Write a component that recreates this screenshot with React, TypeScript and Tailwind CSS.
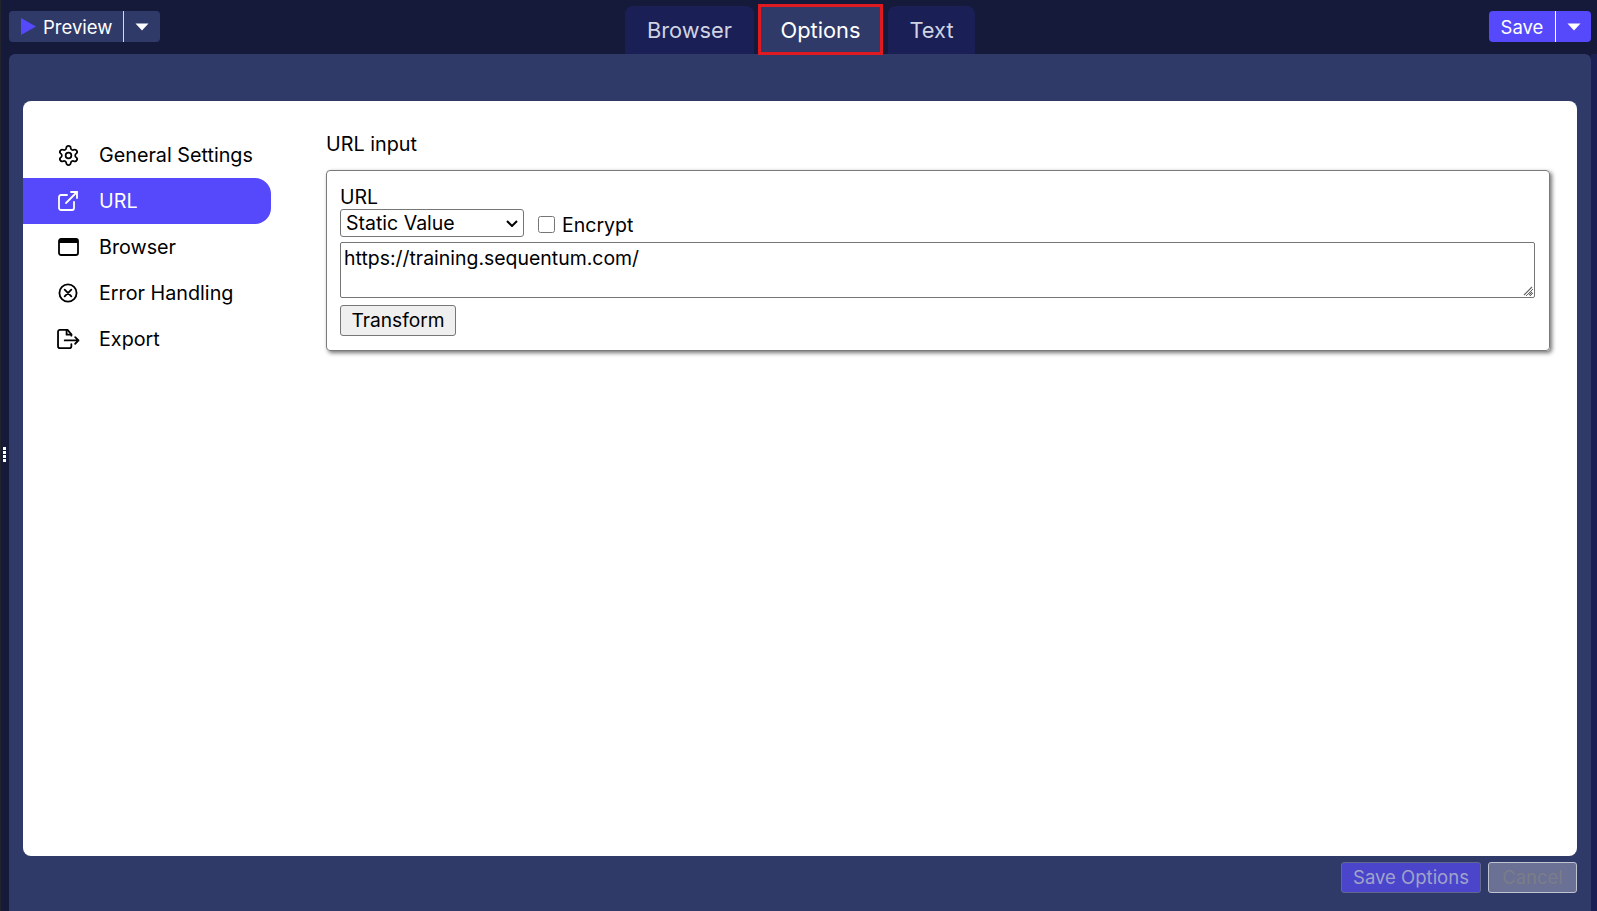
import React from "react";
import { Settings, ExternalLink } from "lucide-react";

function Caret() {
  return (
    <svg width="14" height="8" viewBox="0 0 14 8" aria-hidden="true">
      <path d="M0.5 0.5h13L7 7.5z" fill="#fff" />
    </svg>
  );
}

function BrowserIcon() {
  return (
    <svg width="21" height="18" viewBox="0 0 21 18" fill="none" aria-hidden="true">
      <rect x="1" y="1" width="19" height="16" rx="2" stroke="#000" strokeWidth="1.8" />
      <path d="M1 2.5a1.5 1.5 0 0 1 1.5-1.5h16a1.5 1.5 0 0 1 1.5 1.5V5H1z" fill="#000" />
    </svg>
  );
}

function ErrorIcon() {
  return (
    <svg width="20" height="20" viewBox="0 0 21 21" fill="none" stroke="#000" strokeWidth="1.9" strokeLinecap="round" aria-hidden="true">
      <circle cx="10.5" cy="10.5" r="9" />
      <path d="M7 7l7 7M14 7l-7 7" />
    </svg>
  );
}

function ExportIcon() {
  return (
    <svg width="23" height="20" viewBox="0 0 24 21" fill="none" stroke="#000" strokeWidth="1.9" strokeLinecap="round" strokeLinejoin="round" aria-hidden="true">
      <path d="M15 7V5.6L11 1H3a2 2 0 0 0-2 2v15a2 2 0 0 0 2 2h10a2 2 0 0 0 2-2v-2" />
      <path d="M10 1v5h5" />
      <path d="M8 12h14.5M19 8.5l3.5 3.5-3.5 3.5" />
    </svg>
  );
}

const items = [
  { label: "General Settings", icon: <Settings size={23} strokeWidth={1.8} /> },
  { label: "URL", icon: <ExternalLink size={24} strokeWidth={1.8} />, active: true },
  { label: "Browser", icon: <BrowserIcon /> },
  { label: "Error Handling", icon: <ErrorIcon /> },
  { label: "Export", icon: <ExportIcon /> },
];

export default function App() {
  return (
    <div className="flex h-[911px] w-[1597px] overflow-hidden bg-[#151a3a] font-['Inter',sans-serif]">
      <div className="flex w-[9px] shrink-0 flex-col items-start justify-center border-l border-[#23232b]">
        <div className="ml-[2px] mt-[-2px] flex flex-col gap-[1px]">
          <span className="block h-[3px] w-[3px] bg-white" />
          <span className="block h-[3px] w-[3px] bg-white" />
          <span className="block h-[3px] w-[3px] bg-white" />
          <span className="block h-[3px] w-[3px] bg-white" />
        </div>
      </div>

      <div className="flex min-w-0 flex-1 flex-col">
        <header className="relative z-10 flex h-[54px] shrink-0 items-start justify-between">
          <div className="mt-[11px] flex h-[31px] w-[151px] items-center rounded-[4px] bg-[#2f3a69] text-white">
            <div className="flex h-full w-[115px] items-center border-r border-[#d6d9e6] pl-[12px]">
              <svg className="mb-[1px]" width="15" height="17" viewBox="0 0 15 17" aria-hidden="true">
                <path d="M0 0l15 8.5L0 17z" fill="#5549fb" />
              </svg>
              <span className="ml-[7px] pt-[1px] text-[18.5px] leading-none">Preview</span>
            </div>
            <div className="flex flex-1 items-center justify-center pr-[1px]">
              <Caret />
            </div>
          </div>

          <nav className="mr-[49px] flex h-[54px] items-start text-[21.8px] leading-none">
            <div className="mt-[6px] flex h-[48px] w-[129px] items-center justify-center rounded-t-[8px] bg-[#1a1f55] pt-[2px] text-[#d0d3e2]">Browser</div>
            <div className="ml-[4px] mt-[4px] flex h-[51px] w-[125px] items-center justify-center border-[3px] border-[#df1a21] bg-[#2f3a69] pt-[2px] text-white">Options</div>
            <div className="ml-[5px] mt-[6px] flex h-[48px] w-[87px] items-center justify-center rounded-t-[8px] bg-[#1a1f55] pt-[2px] text-[#d0d3e2]">Text</div>
          </nav>

          <div className="mr-[6px] mt-[11px] flex h-[31px] w-[102px] items-center rounded-[4px] bg-[#5549fb] text-white">
            <div className="flex h-full w-[67px] items-center justify-center border-r border-white pt-[1px] text-[18.5px] leading-none">Save</div>
            <div className="flex flex-1 items-center justify-center">
              <Caret />
            </div>
          </div>
        </header>

        <div className="flex min-h-0 flex-1">
          <main className="flex min-w-0 flex-1 flex-col rounded-t-[6px] bg-[#2f3a69] px-[14px] pt-[47px]">
            <section className="flex h-[755px] rounded-[8px] bg-white text-black">
              <aside className="w-[248px] shrink-0 pt-[31px] text-[19.75px] leading-none">
                <ul className="flex flex-col">
                  {items.map((it) => (
                    <li
                      key={it.label}
                      className={
                        it.active
                          ? "flex h-[46px] items-center rounded-r-[16px] bg-[#5549fb] text-white"
                          : "flex h-[46px] items-center text-black"
                      }
                    >
                      <span className="flex w-[76px] items-center justify-center pl-[14px]">{it.icon}</span>
                      <span className="pt-[2px]">{it.label}</span>
                    </li>
                  ))}
                </ul>
              </aside>

              <div className="min-w-0 flex-1 pl-[55px] pr-[27px] pt-[29px]">
                <h2 className="text-[19.8px] font-normal leading-[28px]">URL input</h2>
                <div className="mt-[12px] h-[181px] rounded-[4px] border border-[#7a7a7a] pl-[13px] pr-[14px] pt-[15px] text-[19.5px] leading-[24px] shadow-[2px_2px_4px_rgba(0,0,0,0.55)]">
                  <label className="block leading-[23px]">URL</label>
                  <div className="flex h-[29px] items-start">
                    <div className="relative h-[28px] w-[184px]">
                      <select
                        className="block h-full w-full appearance-none rounded-[3px] border border-[#767676] bg-white pl-[5px] pt-[2px] text-[19.5px] leading-none text-black"
                        defaultValue="Static Value"
                      >
                        <option>Static Value</option>
                      </select>
                      <svg className="pointer-events-none absolute right-[6px] top-[11px]" width="12" height="7" viewBox="0 0 12 7" fill="none" stroke="#000" strokeWidth="2" aria-hidden="true">
                        <path d="M1 1l5 5 5-5" />
                      </svg>
                    </div>
                    <input type="checkbox" className="ml-[14px] mt-[7px] h-[17px] w-[17px]" />
                    <span className="ml-[7px] mt-[3px] leading-[26px]">Encrypt</span>
                  </div>
                  <div className="relative mt-[4px]">
                    <textarea
                      className="block h-[56px] w-full rounded-[2px] border border-[#767676] bg-white px-[3px] pb-[2px] pt-[3px] text-[19.45px] leading-[24px] text-black"
                      defaultValue="https://training.sequentum.com/"
                    />
                    <svg className="pointer-events-none absolute bottom-[2px] right-[2px]" width="10" height="10" viewBox="0 0 10 10" fill="none" stroke="#666" strokeWidth="1.2" aria-hidden="true">
                      <path d="M1 9l8-8M6 9l3-3" />
                    </svg>
                  </div>
                  <button className="mt-[7px] h-[31px] w-[116px] rounded-[3px] border border-[#767676] bg-[#efefef] text-[19.2px] leading-none text-black">Transform</button>
                </div>
              </div>
            </section>

            <footer className="mt-[6px] flex justify-end gap-[7px]">
              <button className="h-[31px] w-[140px] rounded-[3px] border border-[#626792] bg-[#4a45cb] text-[18.5px] leading-none text-[#a0a3c9]">Save Options</button>
              <button className="h-[31px] w-[89px] rounded-[3px] border border-[#c0c3d0] bg-[#6b7095] text-[18.5px] leading-none text-[#7b7d88]">Cancel</button>
            </footer>
          </main>
          <div className="w-[6px] shrink-0 bg-[#1a1f55]" />
        </div>
      </div>
    </div>
  );
}
